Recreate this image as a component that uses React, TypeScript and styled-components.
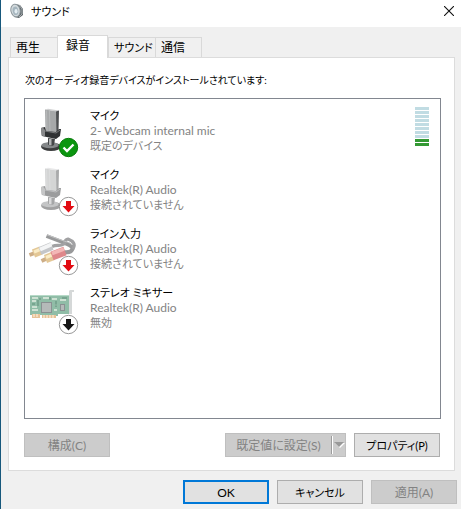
import React from "react";
import styled, { createGlobalStyle } from "styled-components";

const GlobalStyle = createGlobalStyle`
  * { box-sizing: border-box; }
  body {
    margin: 0;
    background: #f0f0f0;
    color: #000;
    font: 12px/15px Lato, "Noto Sans CJK JP", sans-serif;
    font-feature-settings: "palt";
  }
`;

const Dialog = styled.main`
  min-height: 100vh;
  border-left: 1px solid #17587c;
  background: #f0f0f0;
  display: flex;
  flex-direction: column;
`;

const TitleBar = styled.header`
  height: 27px;
  padding: 0 7px 5px 9px;
  background: #fff;
  display: flex;
  align-items: center;
  gap: 7px;
`;

const Title = styled.h1`
  margin: 0;
  flex: 1;
  font-size: 11px;
  font-weight: 400;
`;

const CloseButton = styled.button`
  padding: 0;
  border: 0;
  background: none;
  display: flex;
`;

const TabList = styled.div`
  height: 22px;
  margin: 8px 6px 0 9px;
  display: flex;
  align-items: flex-end;
`;

const Tab = styled.button<{ $active?: boolean; $kana?: boolean }>`
  position: relative;
  height: ${(p) => (p.$active ? 23 : 20)}px;
  width: ${(p) => (p.$active ? 51 : 47)}px;
  margin-bottom: ${(p) => (p.$active ? -1 : 0)}px;
  padding: 0 0 ${(p) => (p.$active ? 3 : 0)}px ${(p) => (p.$active ? 8 : 5)}px;
  border: 1px solid #d9d9d9;
  border-bottom: 0;
  border-right-width: ${(p) => (p.$active ? 1 : 0)}px;
  background: ${(p) => (p.$active ? "#fff" : "#f0f0f0")};
  font: inherit;
  font-size: ${(p) => (p.$kana ? 11 : 12)}px;
  font-feature-settings: inherit;
  color: inherit;
  text-align: left;
  white-space: nowrap;
  &:last-child { border-right-width: 1px; }
`;

const Panel = styled.section`
  flex: 1;
  margin: 0 6px 0 7px;
  padding: 15px 14px 13px 15px;
  border: 1px solid #dcdcdc;
  background: #fff;
  display: flex;
  flex-direction: column;
`;

const Caption = styled.p`
  margin: 0 0 10px 1px;
  font-size: 10px;
  white-space: nowrap;
`;

const DeviceList = styled.ul`
  flex: 1;
  margin: 0 -1px 0 0;
  padding: 7px 11px 0 3px;
  border: 1px solid #828790;
  list-style: none;
`;

const Device = styled.li`
  height: 59px;
  display: flex;
  align-items: flex-start;
  gap: 10px;
`;

const DeviceText = styled.div`
  flex: 1;
  padding-top: 2px;
  color: #838383;
`;

const DeviceName = styled.div`
  color: #000;
  font-size: 11px;
`;

const DeviceStatus = styled.div`
  font-size: 11px;
`;

const Meter = styled.div`
  width: 14px;
  padding-top: 1px;
  display: grid;
  gap: 1px;
`;

const Bar = styled.span<{ $on: boolean }>`
  height: 3px;
  background: ${(p) => (p.$on ? "#339933" : "#c1dce3")};
`;

const Actions = styled.div`
  margin-top: 14px;
  display: flex;
  gap: 8px;
`;

const Footer = styled.footer`
  padding: 9px 4px 5px;
  display: flex;
  justify-content: flex-end;
  gap: 8px;
`;

const Button = styled.button<{ $primary?: boolean; $kana?: boolean }>`
  width: 86px;
  height: 24px;
  padding: 0;
  border: ${(p) => (p.$primary ? "2px solid #0078d7" : "1px solid #adadad")};
  background: #e1e1e1;
  color: #000;
  font: inherit;
  font-size: ${(p) => (p.$kana ? 11 : 12)}px;
  font-feature-settings: inherit;
  white-space: nowrap;
  &:disabled {
    border-color: #bfbfbf;
    background: #ccc;
    color: #838383;
  }
`;

const FirstButton = styled(Button)`
  margin-right: auto;
`;

const SplitButton = styled(Button)`
  width: 121px;
  display: flex;
  align-items: center;
`;

const SplitLabel = styled.span`
  flex: 1;
`;

const SplitArrow = styled.span`
  height: 18px;
  padding-left: 1px;
  border-left: 1px solid #9c9c9c;
  box-shadow: inset 1px 0 #fff;
  display: flex;
  align-items: center;
`;

function SpeakerIcon() {
  return (
    <svg width="14" height="16" viewBox="0 0 14 16" aria-hidden="true">
      <path d="M5 1L10 2L13 6V12L9 15L4 14Z" fill="#5d6468" />
      <path d="M9 2L12 6L12 11L9 14" fill="none" stroke="#a8afb2" />
      <ellipse cx="5.5" cy="7.5" rx="4.6" ry="6.3" transform="rotate(-12 5.5 7.5)" fill="#d3dadd" stroke="#8f999e" />
      <ellipse cx="5.5" cy="7.8" rx="2.8" ry="4.2" transform="rotate(-12 5.5 7.8)" fill="#a5b5be" />
      <ellipse cx="6" cy="8.2" rx="1.5" ry="2.2" fill="#e5eef2" />
    </svg>
  );
}

type BadgeKind = "default" | "unplugged" | "disabled";

function Badge({ kind }: { kind: BadgeKind }) {
  if (kind === "default") {
    return (
      <g>
        <circle cx="40.5" cy="41.5" r="9.2" fill="#0b960f" stroke="#087b0b" />
        <path d="M35.5 41.5L39 45L45.5 38.5" fill="none" stroke="#fff" strokeWidth="2.4" />
      </g>
    );
  }
  return (
    <g>
      <circle cx="40.5" cy="41.5" r="9.2" fill="#fff" stroke="#999" />
      <path
        d="M38 36H43V41H46.5L40.5 47.5L34.5 41H38Z"
        fill={kind === "unplugged" ? "#e20b12" : "#171717"}
      />
    </g>
  );
}

function Microphone({ faded }: { faded?: boolean }) {
  return (
    <g opacity={faded ? 0.48 : 1}>
      <ellipse cx="23" cy="40.8" rx="10" ry="4.2" fill="#3c3d3e" />
      <ellipse cx="22" cy="39.2" rx="8.6" ry="3" fill="#85888a" />
      <path d="M20 32L27 33L26 39Q23 41 20 38.5Z" fill="#444648" />
      <path d="M21 33H23.5V39.5L21 39Z" fill="#b2b4b5" />
      <path d="M28 5L31 4.5L30.5 26L28 28Z" fill="#4d4f51" />
      <path d="M17 3.5L28 5L28.5 28L17.5 26Z" fill="#a6a8a9" />
      <path d="M17 3.5L20 2.8L31 4.5L28 5.4Z" fill="#d0d1d2" />
      <path d="M18.5 4.5L19 25M21.5 5L22 26" stroke="#b7b9ba" strokeWidth="1" />
      <path d="M13 22L17 21L18 25L28 26L31 23L33 23L32 30L28 33L14 30Z" fill="#303234" />
      <path d="M13 22L15 21.5L17 24V30.5L13.5 29.5Z" fill="#88898b" />
      <path d="M17 25L28 27L32 24" fill="none" stroke="#77797b" />
    </g>
  );
}

function LineInPlugs() {
  return (
    <g opacity="0.68" fill="none" strokeLinejoin="round">
      <path d="M18.5 12L33 17.5C39 20 44 21 44.5 24.5C44 28.5 39 28.5 35 28" stroke="#68696b" strokeWidth="4" />
      <path d="M24 22.5C30 20 31 23 36 20C38 18 36 15.5 40 15C45 17 48 20 45 25" stroke="#757678" strokeWidth="3.2" />
      <path d="M19 10.8L33 16C38 18 42 18 44 21" stroke="#a9aaab" strokeWidth="1" />
      <path d="M1.5 31L8 28.5" stroke="#b7894f" strokeWidth="4" />
      <path d="M5.5 29.5L13 26.5" stroke="#d7ae65" strokeWidth="8.5" />
      <path d="M6 28L12 25.5" stroke="#f9e4ad" strokeWidth="3" />
      <path d="M12 27L24 22" stroke="#a9acb0" strokeWidth="8" />
      <path d="M12 25.5L23.5 20.5" stroke="#f0f1f2" strokeWidth="4" />
      <path d="M13.5 37L20 34" stroke="#b7894f" strokeWidth="4" />
      <path d="M17.5 35L25 32" stroke="#d7ae65" strokeWidth="8.5" />
      <path d="M18 33.5L24 31" stroke="#f9e4ad" strokeWidth="3" />
      <path d="M24 32L37 27" stroke="#cf5055" strokeWidth="9" />
      <path d="M24 29.5L36 25" stroke="#ee9695" strokeWidth="3.5" />
    </g>
  );
}

function SoundCard() {
  return (
    <g opacity="0.65">
      <path d="M42 7H46V9H44V31H41V8Z" fill="#c0c4c4" />
      <path d="M2 12H41V31H30V33H14V32H2Z" fill="#559b79" />
      <path d="M2 12.5H41" stroke="#92c7ac" />
      <path d="M14 32H28V35H14ZM4 31H12V35H4Z" fill="#dba361" />
      <path d="M16 32V35M19 32V35M22 32V35M25 32V35M6 31V34M9 31V34" stroke="#fff0d8" strokeWidth="1" />
      <path d="M13 19H24V30H13ZM32 21H37V28H32Z" fill="#4d5759" />
      <path d="M14 20H23V29H14ZM33 22H36V27H33Z" fill="#8e9694" />
      <path d="M4 15H10M4 18H8M15 15H21M24 16H29M32 17H38M4 24H9M4 27H10M27 22H29M26 27H29" stroke="#d5e5d3" strokeWidth="1.5" />
      <path d="M4 21H7M10 17V23M28 18V24M34 15H39M22 14V17M12 15V17" stroke="#266b4a" strokeWidth="1.5" />
    </g>
  );
}

type IconKind = "mic" | "fadedMic" | "line" | "card";

function DeviceIcon({ icon, badge }: { icon: IconKind; badge: BadgeKind }) {
  return (
    <svg width="52" height="54" viewBox="0 0 52 54" aria-hidden="true">
      {icon === "mic" && <Microphone />}
      {icon === "fadedMic" && <Microphone faded />}
      {icon === "line" && <LineInPlugs />}
      {icon === "card" && <SoundCard />}
      <Badge kind={badge} />
    </svg>
  );
}

const devices: {
  name: string;
  detail: string;
  status: string;
  icon: IconKind;
  badge: BadgeKind;
  level?: number;
}[] = [
  { name: "マイク", detail: "2- Webcam internal mic", status: "既定のデバイス", icon: "mic", badge: "default", level: 2 },
  { name: "マイク", detail: "Realtek(R) Audio", status: "接続されていません", icon: "fadedMic", badge: "unplugged" },
  { name: "ライン入力", detail: "Realtek(R) Audio", status: "接続されていません", icon: "line", badge: "unplugged" },
  { name: "ステレオ ミキサー", detail: "Realtek(R) Audio", status: "無効", icon: "card", badge: "disabled" },
];

const tabs = [
  { label: "再生" },
  { label: "録音", active: true },
  { label: "サウンド", kana: true },
  { label: "通信" },
];

export default function App() {
  return (
    <>
      <GlobalStyle />
      <Dialog>
        <TitleBar>
          <SpeakerIcon />
          <Title>サウンド</Title>
          <CloseButton type="button" aria-label="閉じる">
            <svg width="10" height="10" viewBox="0 0 10 10" aria-hidden="true">
              <path d="M0 0L10 10M10 0L0 10" stroke="#111" strokeWidth="1.1" />
            </svg>
          </CloseButton>
        </TitleBar>
        <TabList role="tablist">
          {tabs.map((tab) => (
            <Tab
              key={tab.label}
              type="button"
              role="tab"
              aria-selected={!!tab.active}
              $active={tab.active}
              $kana={tab.kana}
            >
              {tab.label}
            </Tab>
          ))}
        </TabList>
        <Panel role="tabpanel" aria-label="録音">
          <Caption>次のオーディオ録音デバイスがインストールされています:</Caption>
          <DeviceList>
            {devices.map((device, index) => (
              <Device key={index}>
                <DeviceIcon icon={device.icon} badge={device.badge} />
                <DeviceText>
                  <DeviceName>{device.name}</DeviceName>
                  <div>{device.detail}</div>
                  <DeviceStatus>{device.status}</DeviceStatus>
                </DeviceText>
                {device.level !== undefined && (
                  <Meter role="meter" aria-label="入力レベル" aria-valuenow={device.level} aria-valuemin={0} aria-valuemax={10}>
                    {Array.from({ length: 10 }, (_, bar) => (
                      <Bar key={bar} $on={bar >= 10 - device.level!} />
                    ))}
                  </Meter>
                )}
              </Device>
            ))}
          </DeviceList>
          <Actions>
            <FirstButton type="button" disabled>構成(C)</FirstButton>
            <SplitButton type="button" disabled>
              <SplitLabel>既定値に設定(S)</SplitLabel>
              <SplitArrow>
                <svg width="12" height="8" viewBox="0 0 12 8" aria-hidden="true">
                  <path d="M2 2H12L7 7Z" fill="#fff" />
                  <path d="M1 1H11L6 6Z" fill="#999" />
                </svg>
              </SplitArrow>
            </SplitButton>
            <Button type="button" $kana>プロパティ(P)</Button>
          </Actions>
        </Panel>
        <Footer>
          <Button type="button" $primary>OK</Button>
          <Button type="button" $kana>キャンセル</Button>
          <Button type="button" disabled>適用(A)</Button>
        </Footer>
      </Dialog>
    </>
  );
}
